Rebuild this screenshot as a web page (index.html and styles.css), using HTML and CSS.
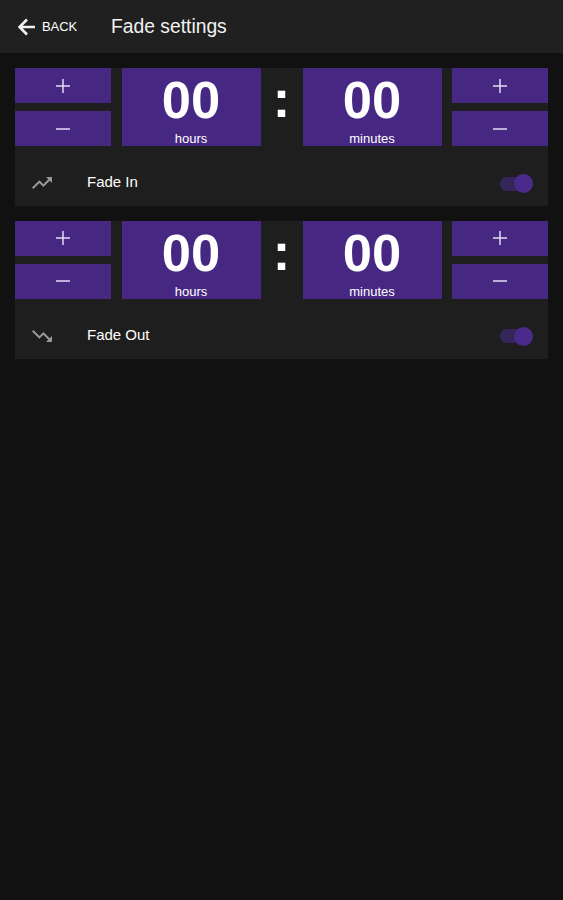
FILE: index.html
```
<!DOCTYPE html>
<html lang="en">
<head>
  <meta charset="utf-8">
  <title>Fade settings</title>
  <link rel="stylesheet" href="styles.css">
</head>
<body>
  <header class="header">
    <button class="back">
      <svg class="back-icon" viewBox="0 0 18 18"><path d="M17 9H2M9 1.5L1.5 9L9 16.5"/></svg>
      <span>BACK</span>
    </button>
    <h1>Fade settings</h1>
  </header>

  <main>
    <section class="card">
      <div class="picker">
        <div class="steps">
          <button class="step" aria-label="More hours"><svg viewBox="0 0 16 16"><path d="M1 8H15M8 1V15"/></svg></button>
          <button class="step" aria-label="Fewer hours"><svg viewBox="0 0 16 16"><path d="M1 8H15"/></svg></button>
        </div>
        <div class="time"><span class="value">00</span><span class="unit">hours</span></div>
        <div class="colon">:</div>
        <div class="time"><span class="value">00</span><span class="unit">minutes</span></div>
        <div class="steps">
          <button class="step" aria-label="More minutes"><svg viewBox="0 0 16 16"><path d="M1 8H15M8 1V15"/></svg></button>
          <button class="step" aria-label="Fewer minutes"><svg viewBox="0 0 16 16"><path d="M1 8H15"/></svg></button>
        </div>
      </div>
      <div class="option">
        <svg class="trend" viewBox="0 0 24 24"><path d="M16 6l2.29 2.29-4.88 4.88-4-4L2 16.59 3.41 18l6-6 4 4 6.3-6.29L22 12V6z"/></svg>
        <span class="label">Fade In</span>
        <button class="toggle" role="switch" aria-checked="true" aria-label="Fade In"></button>
      </div>
    </section>

    <section class="card">
      <div class="picker">
        <div class="steps">
          <button class="step" aria-label="More hours"><svg viewBox="0 0 16 16"><path d="M1 8H15M8 1V15"/></svg></button>
          <button class="step" aria-label="Fewer hours"><svg viewBox="0 0 16 16"><path d="M1 8H15"/></svg></button>
        </div>
        <div class="time"><span class="value">00</span><span class="unit">hours</span></div>
        <div class="colon">:</div>
        <div class="time"><span class="value">00</span><span class="unit">minutes</span></div>
        <div class="steps">
          <button class="step" aria-label="More minutes"><svg viewBox="0 0 16 16"><path d="M1 8H15M8 1V15"/></svg></button>
          <button class="step" aria-label="Fewer minutes"><svg viewBox="0 0 16 16"><path d="M1 8H15"/></svg></button>
        </div>
      </div>
      <div class="option">
        <svg class="trend" viewBox="0 0 24 24"><path d="M16 18l2.29-2.29-4.88-4.88-4 4L2 7.41 3.41 6l6 6 4-4 6.3 6.29L22 12v6z"/></svg>
        <span class="label">Fade Out</span>
        <button class="toggle" role="switch" aria-checked="true" aria-label="Fade Out"></button>
      </div>
    </section>
  </main>
</body>
</html>
```

FILE: styles.css
```
* {
  box-sizing: border-box;
}

body {
  margin: 0;
  min-height: 100vh;
  background-color: #111;
  color: #fff;
  font-family: "Liberation Sans", Arial, sans-serif;
}

button {
  padding: 0;
  border: none;
  color: inherit;
  font-family: inherit;
  cursor: pointer;
}

.header {
  display: flex;
  align-items: center;
  height: 53px;
  padding-left: 18px;
  background-color: #202020;
}

.back {
  display: flex;
  align-items: center;
  gap: 6px;
  width: 93px;
  background: none;
  font-size: 13px;
  letter-spacing: -0.1px;
}

.back-icon {
  width: 18px;
  height: 18px;
  fill: none;
  stroke: #f2f2f2;
  stroke-width: 2.6;
}

.header h1 {
  margin: 0;
  font-size: 19.3px;
  font-weight: normal;
  color: #f2f2f2;
}

main {
  display: flex;
  flex-direction: column;
  gap: 14.6px;
  padding: 15px 15px 0;
}

.card {
  height: 138px;
  background-color: #1e1e1e;
}

.picker {
  display: grid;
  grid-template-columns: 96px 139px 21px 139px 96px;
  column-gap: 10.5px;
  height: 78px;
}

.steps {
  display: flex;
  flex-direction: column;
  justify-content: space-between;
}

.step {
  display: flex;
  align-items: center;
  justify-content: center;
  height: 35px;
  background-color: #462882;
}

.step svg {
  width: 16px;
  height: 16px;
  fill: none;
  stroke: #e4dcf2;
  stroke-width: 1.5;
}

.time {
  display: flex;
  flex-direction: column;
  align-items: center;
  padding-top: 6px;
  background-color: #462882;
}

.value,
.colon {
  font-size: 52.5px;
  font-weight: bold;
  line-height: 52px;
}

.colon {
  padding-top: 5px;
  text-align: center;
}

.unit {
  margin-top: 5px;
  font-size: 13px;
  line-height: 15px;
}

.option {
  display: flex;
  align-items: center;
  height: 60px;
  padding: 14px 15px 0;
}

.trend {
  width: 24px;
  height: 24px;
  margin-right: 33px;
  fill: #999;
}

.label {
  flex: 1;
  margin-bottom: 3px;
  font-size: 15px;
}

.toggle {
  display: flex;
  align-items: center;
  justify-content: flex-end;
  width: 33px;
  height: 14px;
  margin-top: 1px;
  border-radius: 7px;
  background-color: #35255a;
}

.toggle::after {
  content: "";
  width: 19px;
  height: 19px;
  flex: none;
  border-radius: 50%;
  background-color: #4a2a8a;
}
```
